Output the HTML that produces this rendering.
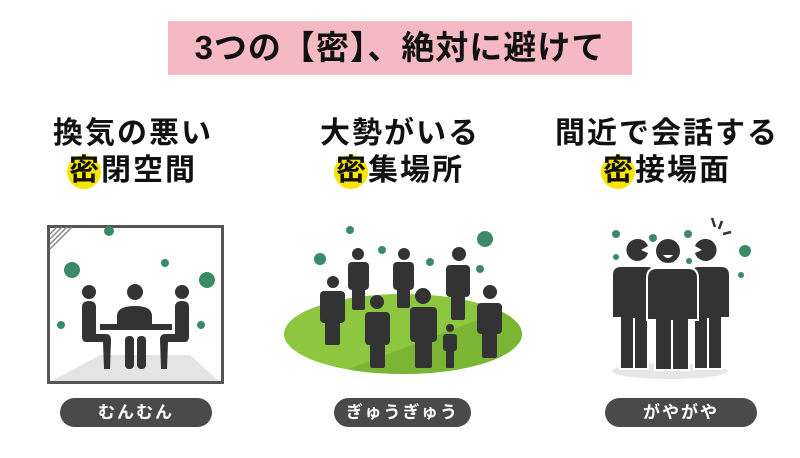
<!DOCTYPE html><html><head><meta charset="utf-8"><style>
body{margin:0;width:800px;height:458px;background:#fff;overflow:hidden;position:relative;font-family:"Liberation Sans","Noto Sans CJK JP",sans-serif;color:#111}
.title{position:absolute;left:168px;top:21px;width:464px;height:54px;background:#f4b9c3;text-align:center;font-size:33px;font-weight:bold;line-height:54px;letter-spacing:1px}
.h{position:absolute;width:260px;text-align:center;font-size:30px;font-weight:bold;line-height:37px;letter-spacing:2px}
.m{position:relative;display:inline-block;z-index:0}
.m:before{content:"";position:absolute;left:-2px;top:3px;width:34px;height:34px;border-radius:50%;background:#f7e500;z-index:-1}
.pill{position:absolute;top:398px;height:29px;border-radius:15px;background:#4a4a4a;color:#fff;text-align:center;line-height:29px;font-size:17px;font-weight:bold;letter-spacing:2px}
svg{position:absolute;left:0;top:0}
</style></head><body>
<div class="title">3つの【密】、絶対に避けて</div>
<div class="h" style="left:3px;top:115px">換気の悪い<br><span class="m">密</span>閉空間</div>
<div class="h" style="left:270px;top:115px">大勢がいる<br><span class="m">密</span>集場所</div>
<div class="h" style="left:537px;top:115px">間近で会話する<br><span class="m">密</span>接場面</div>
<svg width="800" height="458">
<defs>
<clipPath id="ec"><ellipse cx="403" cy="334" rx="119" ry="40"/></clipPath>
</defs>
<!-- room -->
<polygon points="100,355 190,355 220,382 50,382" fill="#e4e4e4"/>
<rect x="48.5" y="226.5" width="174" height="156" fill="none" stroke="#555" stroke-width="3"/>
<path d="M50,234 L57,227 M50,239 L62,227 M50,244 L67,227 M50,249 L72,227" stroke="#888" stroke-width="1.5"/>
<g fill="#333">
<circle cx="135" cy="292" r="8"/>
<path d="M117,325 V316 Q117,306 135,306 Q152,306 152,316 V325 Z"/>
<rect x="100" y="324" width="72" height="6"/>
<rect x="125" y="336" width="9" height="33" rx="4"/><rect x="137" y="336" width="9" height="33" rx="4"/>
<circle cx="89" cy="292" r="7"/>
<path d="M82,307 Q82,301 89,301 Q96,301 96,307 V334 H106 Q111,334 111,340 L110,369 H104 L103,342 H86 Q82,342 82,336 Z"/>
<circle cx="182" cy="292" r="7"/>
<path d="M189,307 Q189,301 182,301 Q175,301 175,307 V334 H165 Q160,334 160,340 L161,369 H167 L168,342 H185 Q189,342 189,336 Z"/>
</g>
<g fill="#3a8a68">
<circle cx="109" cy="231" r="5"/><circle cx="72" cy="270" r="8"/><circle cx="165" cy="263" r="4"/><circle cx="207" cy="280" r="8"/><circle cx="61" cy="325" r="4"/><circle cx="201" cy="325" r="4"/>
<circle cx="320" cy="259" r="6"/><circle cx="350" cy="230" r="4"/><circle cx="382" cy="250" r="4"/><circle cx="430" cy="262" r="4"/><circle cx="485" cy="239" r="8"/><circle cx="480" cy="269" r="4"/>
<circle cx="616" cy="234" r="4"/><circle cx="653" cy="238" r="4"/><circle cx="688" cy="234" r="4"/><circle cx="616" cy="257" r="3"/><circle cx="689" cy="261" r="3"/><circle cx="745" cy="251" r="6"/><circle cx="741" cy="275" r="3"/>
</g>
<!-- crowd -->
<ellipse cx="403" cy="334" rx="119" ry="40" fill="#8dc63f"/>
<polygon points="320,380 530,300 530,380" fill="#7ab534" clip-path="url(#ec)"/>
<g fill="#333">
<circle cx="333" cy="282" r="6"/><rect x="320" y="291" width="25" height="32" rx="4"/><rect x="325" y="318" width="15" height="27" rx="2"/>
<circle cx="358" cy="254" r="6"/><rect x="348" y="262" width="21" height="28" rx="4"/><rect x="352" y="285" width="13" height="25" rx="2"/>
<circle cx="404" cy="254" r="6"/><rect x="393" y="262" width="21" height="28" rx="4"/><rect x="397" y="285" width="13" height="23" rx="2"/>
<circle cx="377" cy="302" r="7"/><rect x="365" y="312" width="25" height="33" rx="4"/><rect x="370" y="340" width="15" height="28" rx="2"/>
<circle cx="423" cy="296" r="8"/><rect x="410" y="307" width="27" height="35" rx="4"/><rect x="415" y="337" width="17" height="31" rx="2"/>
<circle cx="459" cy="254" r="7"/><rect x="446" y="265" width="24" height="32" rx="4"/><rect x="451" y="292" width="14" height="28" rx="2"/>
<circle cx="490" cy="292" r="7"/><rect x="477" y="303" width="25" height="31" rx="4"/><rect x="482" y="330" width="15" height="28" rx="2"/>
<circle cx="450" cy="328" r="4"/><rect x="443" y="334" width="14" height="17" rx="3"/><rect x="446" y="348" width="8" height="20" rx="1"/>
</g>
<!-- conversation -->
<ellipse cx="670" cy="371" rx="58" ry="8" fill="#e6e6e6"/>
<g fill="#333" stroke="#fff" stroke-width="2">
<path d="M621,266 H647 Q656,266 656,275 V318 H648 V369 H620 V318 H612 V275 Q612,266 621,266 Z"/>
<path d="M699,266 H721 Q730,266 730,275 V318 H722 V369 H694 V318 H690 V275 Q690,266 699,266 Z"/>
<path d="M657,268 H688 Q698,268 698,278 V320 H689 V370 H655 V320 H647 V278 Q647,268 657,268 Z"/>
</g>
<path d="M634,318 V369 M708,318 V369 M672,320 V370" stroke="#fff" stroke-width="2"/>
<g fill="#333">
<path d="M637,239 A11,11 0 1 0 648,253 L641,250 L648,246 A11,11 0 0 0 637,239 Z"/>
<circle cx="668" cy="251" r="12"/>
<path d="M706,239 A11,11 0 1 1 695,253 L702,250 L695,246 A11,11 0 0 1 706,239 Z"/>
</g>
<path d="M663,255 Q668,261 673,255 Z" fill="#fff"/>
<path d="M712,218 L715,227 M722,221 L719,229 M731,232 L723,234" stroke="#333" stroke-width="2.5"/>
</svg>
<div class="pill" style="left:60px;width:152px">むんむん</div>
<div class="pill" style="left:334px;width:137px">ぎゅうぎゅう</div>
<div class="pill" style="left:605px;width:152px">がやがや</div>
</body></html>
